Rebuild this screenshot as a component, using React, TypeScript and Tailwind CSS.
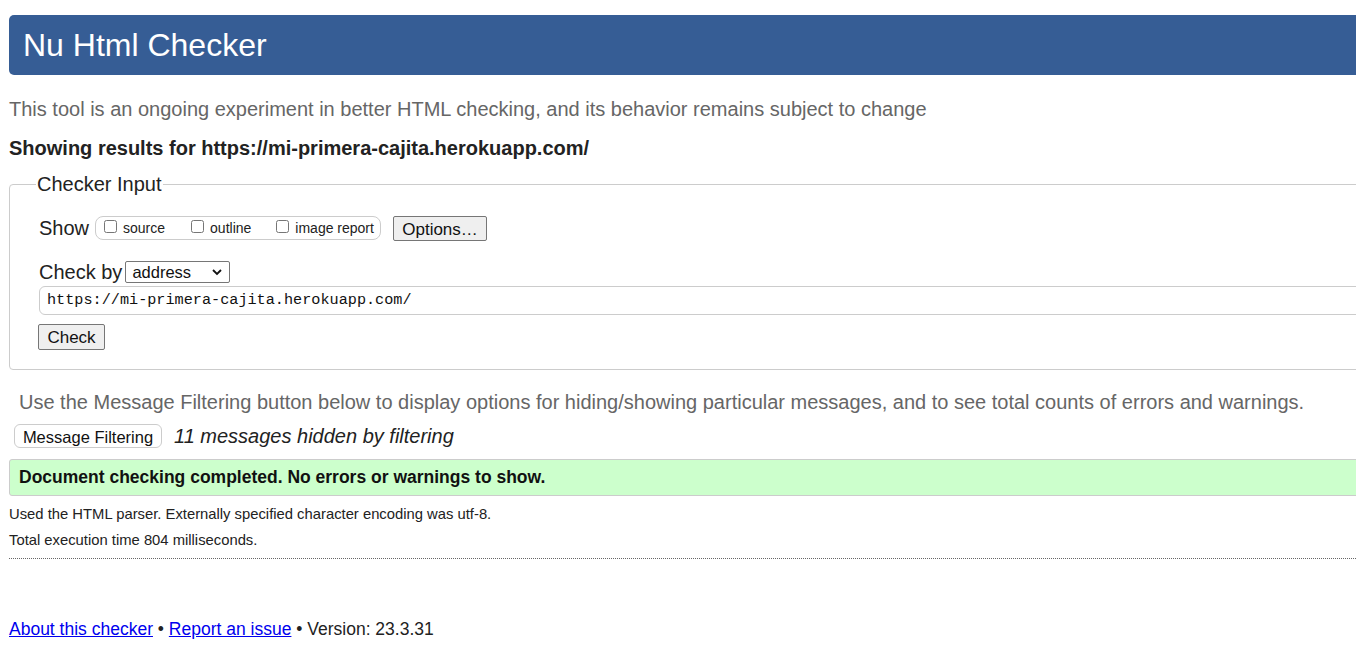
import React from "react";

export default function App() {
  const font = { fontFamily: '"Liberation Sans", Arial, sans-serif' };
  return (
    <div className="w-[1356px] h-[652px] overflow-hidden bg-white" style={font}>
      <div className="w-[1400px] pl-[9px] pt-[15px]">
        <h1 className="h-[60px] bg-[#365d95] rounded-l-[5px] text-white text-[32px] leading-[60px] pl-[14px] font-normal">
          Nu Html Checker
        </h1>
        <p className="mt-[22px] text-[20px] leading-[24px] text-[#666]">
          This tool is an ongoing experiment in better HTML checking, and its behavior remains subject to change
        </p>
        <p className="mt-[15px] text-[20px] leading-[24px] font-bold text-[#222]">
          Showing results for https://mi-primera-cajita.herokuapp.com/
        </p>
        <fieldset className="mt-[13px] border border-[#ccc] rounded-[4px] pl-[29px] pb-[19px] pt-[6px]">
          <legend className="-ml-[3px] px-[1px] text-[20px] leading-[22px] text-[#222]">Checker Input</legend>
          <div className="flex items-center h-[26px] mt-[14px]">
            <span className="text-[20px] text-[#222] mr-[6px]">Show</span>
            <div className="flex items-center h-[24px] w-[286px] border border-[#ccc] rounded-[8px] pl-[8px] text-[14px] text-[#222]">
              <label className="flex items-center">
                <input type="checkbox" className="w-[13px] h-[13px] mr-[6px] -mt-[4px]" />source
              </label>
              <label className="flex items-center ml-[26px]">
                <input type="checkbox" className="w-[13px] h-[13px] mr-[6px] -mt-[4px]" />outline
              </label>
              <label className="flex items-center ml-[25px]">
                <input type="checkbox" className="w-[13px] h-[13px] mr-[6px] -mt-[4px]" />image report
              </label>
            </div>
            <button className="ml-[12px] h-[25px] w-[94px] border border-[#767676] rounded-[2px] bg-[#efefef] text-[17px] text-[#111]">
              Options…
            </button>
          </div>
          <div className="flex items-center h-[24px] mt-[19px]">
            <span className="text-[20px] text-[#222] mr-[3px]">Check by</span>
            <div className="relative w-[105px] h-[22px] border border-[#767676] rounded-[2px] bg-white text-[16.5px] text-[#111] pl-[6px] leading-[20px]">
              address
              <svg className="absolute right-[7px] top-[7px]" width="10" height="7" viewBox="0 0 10 7">
                <path d="M1 1 L5 5 L9 1" fill="none" stroke="#111" strokeWidth="1.8" />
              </svg>
            </div>
          </div>
          <div className="mt-[2px] h-[29px] border border-[#ccc] rounded-[6px] pl-[7px] flex items-center text-[15.2px] text-[#111]" style={{ fontFamily: '"Liberation Mono", "DejaVu Sans Mono", monospace' }}>
            https://mi-primera-cajita.herokuapp.com/
          </div>
          <button className="mt-[9px] h-[26px] w-[67px] border border-[#767676] rounded-[2px] bg-[#efefef] text-[17px] text-[#111] -ml-[1px]">
            Check
          </button>
        </fieldset>
        <p className="mt-[20px] ml-[10px] text-[20px] leading-[24px] text-[#666]">
          Use the Message Filtering button below to display options for hiding/showing particular messages, and to see total counts of errors and warnings.
        </p>
        <div className="flex items-center mt-[10px] ml-[5px] h-[24px]">
          <button className="h-[24px] w-[148px] border border-[#ccc] rounded-[6px] bg-white text-[16.5px] text-[#111]">
            Message Filtering
          </button>
          <span className="ml-[12px] text-[20px] italic text-[#222]">11 messages hidden by filtering</span>
        </div>
        <div className="mt-[11px] h-[37px] bg-[#ccffcc] border border-[#ccc] rounded-l-[3px] pl-[9px] flex items-center text-[17.5px] font-bold text-[#111]">
          Document checking completed. No errors or warnings to show.
        </div>
        <p className="mt-[10px] text-[14.8px] leading-[17px] text-[#222]">
          Used the HTML parser. Externally specified character encoding was utf-8.
        </p>
        <p className="mt-[9px] text-[14.8px] leading-[17px] text-[#222]">
          Total execution time 804 milliseconds.
        </p>
        <div className="mt-[9px] border-t border-dotted border-[#666]" />
        <p className="mt-[60px] text-[17.5px] leading-[20px] text-[#222]">
          <a href="#" className="text-[#0000ee] underline">About this checker</a> •{" "}
          <a href="#" className="text-[#0000ee] underline">Report an issue</a> • Version: 23.3.31
        </p>
      </div>
    </div>
  );
}
